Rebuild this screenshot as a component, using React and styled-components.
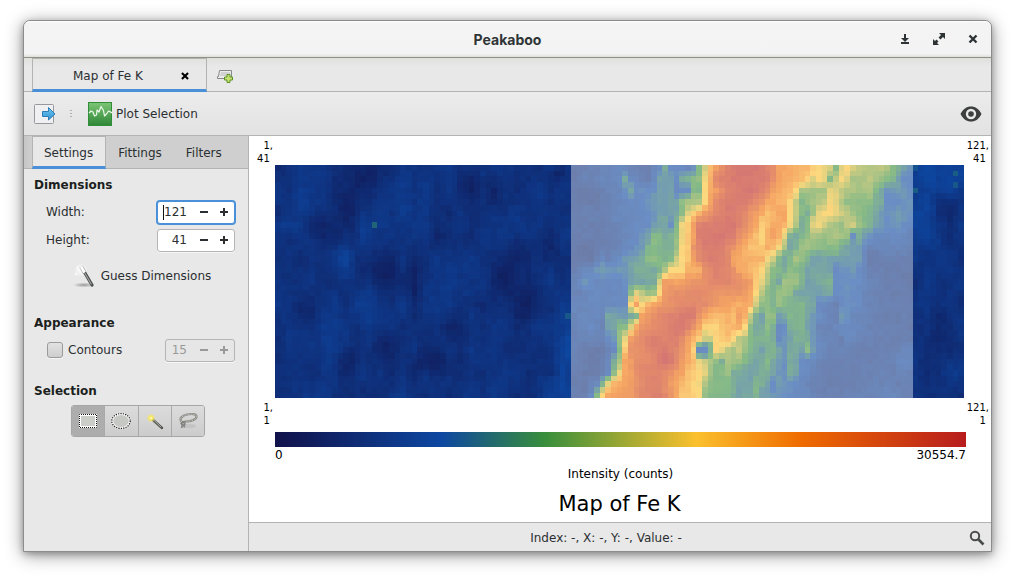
import React from "react";
import styled, { createGlobalStyle, css } from "styled-components";

const GlobalStyle = createGlobalStyle`
  * { box-sizing: border-box; }
  body {
    margin: 0;
    background: #fff;
    color: #2b2f31;
    font: 12px/16px "DejaVu Sans", sans-serif;
  }
  button, input { font: inherit; color: inherit; }
  button { padding: 0; border: 0; background: none; }
  svg { display: block; }
`;

/* ---------- intensity map data ---------- */

const COLS = 121;
const ROWS = 41;
const SELECTION = { from: 52, to: 112 };

const SPECTRUM = [
  [0, [17, 18, 74]],
  [0.235, [13, 71, 161]],
  [0.39, [56, 142, 60]],
  [0.61, [251, 192, 45]],
  [0.76, [239, 108, 0]],
  [1, [183, 28, 28]],
];

/* Every second row: column, intensity in percent, column, intensity ... */
const KEY_ROWS = [
  "52 14 56 17 60 20 65 13 67 22 68 34 69 24 72 20 73 25 74 38 75 52 76 70 77 78 79 90 81 96 85 95 87 84 88 77 93 70 95 61 97 55 98 40 99 55 100 61 102 50 104 47 106 50 107 46 108 40 110 30 111 27",
  "52 14 55 17 60 21 61 33 62 22 65 14 67 30 69 30 70 24 71 33 73 40 74 42 75 60 76 74 77 88 80 94 85 95 86 92 88 76 92 70 94 56 95 60 96 58 97 40 99 61 101 46 104 48 106 42 108 38 109 30 110 24 111 24",
  "52 13 56 13 60 20 61 24 62 33 63 23 66 25 67 30 69 30 70 22 72 22 73 40 74 38 75 60 76 74 78 85 80 92 83 96 84 94 86 85 87 77 90 70 91 62 92 46 96 45 97 58 98 56 100 46 104 46 105 38 106 32 107 25 109 30 111 25",
  "52 13 56 13 60 19 64 22 66 29 70 30 71 40 72 47 74 47 75 60 76 75 77 87 79 94 82 93 85 82 86 76 89 70 90 62 91 50 92 38 94 44 96 50 97 61 98 55 100 42 102 40 104 40 106 33 107 24 109 23 111 27",
  "52 14 56 16 60 20 65 22 67 30 70 31 71 40 72 55 73 63 74 72 75 80 77 88 79 94 81 92 83 82 85 74 86 66 88 75 89 78 90 60 91 50 92 40 93 35 94 45 95 58 97 62 98 57 100 50 101 44 103 40 104 37 106 28 107 24 109 29 111 25",
  "52 14 57 14 61 20 65 23 66 28 68 33 69 25 70 38 71 58 72 66 73 80 74 91 77 93 80 95 82 85 84 75 85 63 87 75 89 71 90 60 91 48 92 33 93 40 94 57 95 59 97 47 99 43 101 54 102 42 104 36 105 30 107 25 109 27 111 21",
  "52 14 58 14 63 22 65 30 66 40 67 38 68 33 70 41 71 57 72 65 73 75 74 92 78 96 80 93 81 85 83 75 85 63 86 72 87 78 88 72 89 56 90 36 91 33 92 38 94 46 96 43 98 46 100 42 101 24 102 34 103 28 105 22 111 20",
  "52 14 54 11 60 17 64 27 65 36 66 40 67 37 69 34 70 44 71 61 72 66 73 83 75 94 78 92 79 88 81 77 83 68 85 66 86 73 87 69 88 60 89 45 90 32 91 36 92 45 94 43 95 40 98 40 100 31 102 29 103 22 104 16 106 19 111 18",
  "52 13 55 12 57 22 58 17 62 30 64 32 65 40 67 40 68 35 69 40 70 52 71 60 72 66 73 77 74 86 76 93 78 90 79 86 80 76 83 72 85 72 86 60 87 52 88 38 89 32 91 45 92 42 93 37 94 30 98 31 102 29 103 20 104 13 107 15 111 15",
  "52 15 55 21 57 30 58 26 61 28 63 34 66 34 67 38 68 46 69 60 71 60 72 73 74 73 75 84 77 92 79 88 80 83 81 76 84 66 85 61 86 50 87 39 89 36 90 41 92 37 93 30 95 32 97 31 98 22 101 27 102 22 104 15 108 14 111 13",
  "52 17 54 27 56 20 60 21 62 30 66 33 67 55 68 80 70 77 72 80 75 85 78 90 81 85 83 80 84 66 85 58 86 46 87 38 88 33 89 45 91 43 92 36 93 30 95 33 97 37 98 22 101 25 104 18 106 15 111 14",
  "52 16 55 20 60 21 61 24 62 40 63 56 64 50 65 42 66 45 67 62 68 80 70 84 74 86 77 81 80 82 82 80 83 75 84 60 85 48 86 40 87 38 88 44 90 40 91 32 95 30 97 33 98 22 100 25 103 19 106 15 111 14",
  "52 20 56 21 61 22 62 61 63 79 64 61 65 72 67 80 70 86 73 89 76 84 78 78 81 73 83 74 84 54 85 42 87 37 88 42 90 36 92 37 94 31 95 22 98 16 99 22 101 24 103 19 105 16 111 14",
  "52 18 55 21 57 19 58 31 61 29 62 34 63 39 64 77 66 85 70 92 73 94 74 82 75 75 77 68 79 73 80 68 81 79 82 74 83 51 84 36 85 31 86 41 87 41 88 30 90 37 92 36 94 28 96 20 98 16 99 29 101 20 104 17 108 14 111 15",
  "52 17 55 22 57 17 58 30 59 31 60 39 61 40 62 55 63 75 64 82 68 89 71 95 73 84 74 76 75 62 77 63 79 70 81 74 82 62 83 42 84 34 85 33 86 41 87 35 88 22 89 24 90 36 92 36 94 26 95 18 97 15 99 22 101 22 103 17 111 14",
  "52 17 57 18 59 28 60 43 61 57 62 80 64 86 66 93 68 90 70 92 72 79 73 72 74 65 75 53 76 53 77 62 79 68 80 60 81 50 82 47 83 38 86 36 87 33 88 22 89 27 91 35 93 35 94 26 95 20 99 16 100 20 103 16 111 14",
  "52 17 55 12 57 13 59 22 60 40 61 66 62 82 66 90 68 94 70 88 71 82 72 75 73 64 76 54 77 62 79 50 80 44 81 51 82 43 83 38 85 31 87 37 89 27 90 33 92 31 93 40 94 29 95 21 97 17 104 15 109 16 110 20 111 21",
  "52 16 56 12 58 18 59 34 60 46 61 75 63 84 66 88 68 97 69 95 70 86 71 80 73 68 74 58 75 52 76 47 77 41 78 36 79 46 81 42 82 38 84 30 86 38 88 27 89 25 90 34 91 31 92 23 94 20 96 15 108 16 109 22 111 20",
  "52 14 56 12 58 21 59 40 60 58 61 75 64 88 67 90 70 80 71 76 72 68 74 62 75 56 76 45 77 38 79 42 80 34 83 31 86 35 88 27 89 24 90 34 91 30 92 22 95 17 97 14 105 16 111 17",
  "52 14 54 14 56 21 57 38 58 58 59 72 62 79 65 91 67 90 69 79 71 71 73 62 74 59 75 48 76 39 79 38 81 32 83 30 84 37 86 31 87 23 88 29 90 25 92 21 94 15 99 14 105 17 111 15",
  "52 14 54 14 55 22 56 41 57 61 58 75 62 80 64 87 67 92 69 82 70 76 71 67 74 60 75 41 77 37 79 37 81 31 83 34 84 37 85 29 88 27 90 22 92 21 96 15 104 17 107 20 111 16",
].map((line) => {
  const n = line.split(" ").map(Number);
  const points = [];
  for (let i = 0; i < n.length; i += 2) points.push([n[i], n[i + 1] / 100]);
  return points;
});

/* Local highs and lows outside the bright band: column, row, rx, ry, change */
const SPOTS = [
  [15, 3, 4, 4, -0.08], [12, 8, 2, 4, -0.07], [18, 18, 3, 3, -0.09], [24, 22, 1, 4, -0.06],
  [24, 16, 1, 3, -0.05], [27, 34, 3, 2, -0.08], [13, 34, 3, 2, -0.06], [40, 19, 2, 3, -0.07],
  [43, 24, 2, 3, -0.07], [38, 5, 2, 3, -0.05], [34, 3, 2, 2, -0.06], [49, 1, 1, 1, -0.08],
  [42, 14, 2, 2, -0.05], [47, 13, 2, 2, -0.05], [4, 25, 2, 2, -0.05], [19, 31, 2, 2, -0.06],
  [7, 10, 2, 2, -0.05], [31, 28, 2, 2, -0.05], [35, 24, 2, 1, -0.05], [30, 13, 3, 2, -0.04],
  [15, 11, 1, 3, 0.07], [12, 17, 2, 3, 0.06], [1, 10, 2, 1, 0.06], [51, 31, 2, 6, 0.08],
  [33, 20, 3, 2, 0.03], [4, 5, 2, 2, 0.04], [9, 33, 1, 3, 0.05], [15, 35, 1, 2, 0.06],
  [22, 4, 3, 4, 0.03], [50, 39, 3, 2, 0.05], [17, 24, 3, 3, 0.03], [19, 8, 3, 3, 0.03],
  [115, 1, 8, 4, 0.08], [113, 9, 3, 4, 0.06], [118, 7, 2, 2, -0.06], [116, 27, 2, 3, -0.03],
];

const SINGLE_CELLS = {
  "17,10": 0.3, "51,26": 0.27, "112,0": 0.26, "112,4": 0.28, "119,1": 0.28, "119,3": 0.27,
  "74,31": 0.38, "75,31": 0.31, "76,31": 0.38, "74,32": 0.22, "75,32": 0.23, "76,32": 0.37,
  "74,33": 0.36, "75,33": 0.32, "76,33": 0.4,
};

const random = (x, y) => {
  const s = Math.sin(x * 127.1 + y * 311.7) * 43758.5453;
  return s - Math.floor(s);
};

const smoothNoise = (x, y) => {
  const x0 = Math.floor(x);
  const y0 = Math.floor(y);
  const fx = x - x0;
  const fy = y - y0;
  const top = random(x0, y0) * (1 - fx) + random(x0 + 1, y0) * fx;
  const bottom = random(x0, y0 + 1) * (1 - fx) + random(x0 + 1, y0 + 1) * fx;
  return top * (1 - fy) + bottom * fy - 0.5;
};

const sample = (points, col) => {
  for (let i = 1; i < points.length; i++) {
    const [x1, v1] = points[i];
    if (col <= x1) {
      const [x0, v0] = points[i - 1];
      return v0 + ((v1 - v0) * (col - x0)) / (x1 - x0);
    }
  }
  return points[points.length - 1][1];
};

const intensity = (col, row) => {
  const single = SINGLE_CELLS[`${col},${row}`];
  if (single) return single;
  if (col >= SELECTION.from && col < SELECTION.to) {
    const k = row >> 1;
    const base =
      row % 2 === 0
        ? sample(KEY_ROWS[k], col)
        : (sample(KEY_ROWS[k], col) + sample(KEY_ROWS[k + 1], col)) / 2;
    const lift = base > 0.8 ? 0.02 : 0;
    return base + lift + (random(col, row) - 0.5) * 0.03;
  }
  let v = 0.142 + smoothNoise(col / 2, row / 4) * 0.06 + (random(col, row) - 0.5) * 0.025;
  SPOTS.forEach(([x, y, rx, ry, change]) => {
    const d = ((col - x) / rx) ** 2 + ((row - y) / ry) ** 2;
    v += change * 0.85 * Math.exp(-d * 0.7);
  });
  return Math.max(0.06, Math.min(0.23, v));
};

const colorOf = (v) => {
  const value = Math.max(0, Math.min(1, v));
  const i = Math.max(1, SPECTRUM.findIndex(([stop]) => value <= stop));
  const [s0, c0] = SPECTRUM[i - 1];
  const [s1, c1] = SPECTRUM[i];
  const t = (value - s0) / (s1 - s0);
  return `rgb(${c0.map((c, n) => Math.round(c + (c1[n] - c) * t)).join(",")})`;
};

const CELLS = Array.from({ length: COLS * ROWS }, (_, i) => {
  const x = i % COLS;
  const y = Math.floor(i / COLS);
  return { x, y, fill: colorOf(intensity(x, y)) };
});

const SPECTRUM_CSS = SPECTRUM.map(([stop, c]) => `rgb(${c.join(",")}) ${Math.round(stop * 100)}%`).join(", ");

/* ---------- layout ---------- */

const Desktop = styled.div`
  display: flex;
  min-height: 100vh;
  padding: 20px 23px 26px;
`;

const Window = styled.div`
  flex: 1;
  min-width: 0;
  display: flex;
  flex-direction: column;
  border: 1px solid #8c8c8c;
  border-radius: 7px 7px 0 0;
  background: #e8e8e8;
  box-shadow: 0 3px 18px rgba(0, 0, 0, 0.42), 0 2px 6px rgba(0, 0, 0, 0.25);
`;

const TitleBar = styled.header`
  display: grid;
  grid-template-columns: 1fr auto 1fr;
  align-items: center;
  height: 37px;
  border-bottom: 1px solid #8f9184;
  border-radius: 6px 6px 0 0;
  background: linear-gradient(#fff 0, #f4f4f4 2px, #f3f3f3 33px, #dededa 36px);
`;

const Title = styled.h1`
  grid-column: 2;
  margin: 0;
  padding-top: 2px;
  color: #2f3536;
  font: bold 14px/20px "Inter", sans-serif;
`;

const WindowButtons = styled.div`
  display: flex;
  justify-content: flex-end;
  gap: 18px;
  padding-right: 10px;
  color: #2e3436;
`;

const TabStrip = styled.div`
  display: flex;
  align-items: stretch;
  height: 34px;
  padding-left: 8px;
  border-bottom: 1px solid #b3b3b1;
  background: linear-gradient(#dfdfdd 0, #e8e8e8 8px);
`;

const DocumentTab = styled.div`
  display: flex;
  align-items: center;
  justify-content: space-between;
  width: 175px;
  margin-bottom: -1px;
  padding: 3px 14px 0 40px;
  border: 1px solid #b3b3b1;
  border-bottom: 3px solid #4a90d9;
  white-space: nowrap;
`;

const PlainButton = styled.button`
  display: inline-flex;
  align-items: center;
  gap: ${(p) => p.$gap || 0}px;
`;

const NewTabButton = styled(PlainButton)`
  padding: 2px 9px 0;
`;

const ToolBar = styled.div`
  display: flex;
  align-items: center;
  height: 44px;
  padding: 1px 9px 0 10px;
  border-bottom: 1px solid #b3b3b1;
  background: linear-gradient(#ececec, #e2e2e2);
`;

const Handle = styled.span`
  width: 2px;
  height: 8px;
  margin: 0 16px 0 14px;
  background: repeating-linear-gradient(#b0b0b0 0 1px, transparent 1px 3px);
`;

const Spacer = styled.span`
  flex: 1;
`;

const Body = styled.div`
  flex: 1;
  display: flex;
`;

const Sidebar = styled.aside`
  flex: 0 0 225px;
  border-right: 1px solid #b3b3b1;
`;

const SideTabs = styled.div`
  display: flex;
  height: 33px;
  padding-left: 8px;
  border-bottom: 1px solid #b3b3b1;
  background: linear-gradient(90deg, #c6c6c6, #cfcfcf 8px);
`;

const SideTab = styled.button`
  padding: 2px 11px 0;
  margin-bottom: -1px;
  border: 1px solid transparent;
  border-bottom-width: 3px;
  ${(p) =>
    p.$active &&
    css`
      padding: 2px 12px 0 11px;
      border-color: #b3b3b1;
      border-bottom-color: #4a90d9;
      background: #e8e8e8;
    `}
`;

const Panel = styled.div`
  padding: 8px 13px 0 10px;
`;

const Heading = styled.h2`
  margin: 0;
  color: #1c1f20;
  font: bold 12px/16px "DejaVu Sans", sans-serif;
`;

const Group = styled.section`
  margin-bottom: ${(p) => p.$after || 0}px;
`;

const Field = styled.div`
  display: flex;
  align-items: center;
  justify-content: space-between;
  height: 28px;
  padding-left: 12px;
  &:first-of-type { margin-top: 5px; }
`;

const CheckLabel = styled.label`
  display: flex;
  align-items: center;
  gap: 5px;
`;

const CheckBox = styled.input`
  appearance: none;
  width: 16px;
  height: 16px;
  margin: 0 0 0 1px;
  border: 1px solid #9b9b9b;
  border-radius: 3px;
  background: linear-gradient(#e2e2e2, #cecece);
  box-shadow: 0 1px #f6f6f6;
`;

const SpinBox = styled.div`
  display: flex;
  align-items: center;
  width: ${(p) => (p.$narrow ? 70 : 78)}px;
  height: 23px;
  border: 1px solid ${(p) => (p.$focused ? "#4a90d9" : "#b5b5b5")};
  border-radius: 3px;
  color: ${(p) => (p.$disabled ? "#999" : "#2b2f31")};
  background: ${(p) => (p.$disabled ? "#e6e6e6" : "#fff")};
  box-shadow: ${(p) => (p.$focused ? "0 0 0 1px #4a90d9" : "0 1px #f6f6f6")};
`;

const Caret = styled.span`
  width: 1px;
  height: 15px;
  margin-left: 5px;
  background: #111;
`;

const SpinInput = styled.input`
  flex: 1;
  width: 0;
  min-width: 0;
  padding: 0 7px 0 0;
  border: 0;
  outline: 0;
  background: none;
  text-align: right;
`;

const StepButton = styled.button`
  display: flex;
  justify-content: center;
  width: 20px;
`;

const GuessRow = styled.div`
  display: flex;
  justify-content: center;
  margin-top: 10px;
  padding-left: 15px;
`;

const ToolGroup = styled.div`
  display: flex;
  width: 134px;
  margin: 6px auto 0 37px;
  border: 1px solid #a6a6a6;
  border-radius: 3px;
  overflow: hidden;
`;

const ToolButton = styled.button`
  display: flex;
  flex: 1;
  align-items: center;
  justify-content: center;
  height: 30px;
  background: ${(p) => (p.$pressed ? "#adadad" : "linear-gradient(#dcdcdc, #cccccc)")};
  & + & { border-left: 1px solid #a9a9a9; }
`;

const Main = styled.main`
  flex: 1;
  min-width: 0;
  display: flex;
  flex-direction: column;
  color: #000;
  background: #fff;
`;

const Chart = styled.figure`
  flex: 1;
  margin: 0;
`;

const CornerRow = styled.div`
  display: flex;
  justify-content: space-between;
  padding: 3px 2px 0 8px;
  font-size: 10px;
  line-height: 13px;
  text-align: right;
  white-space: pre;
`;

const CornerLabel = styled.span`
  min-width: 16px;
`;

const HeatMap = styled.svg`
  width: calc(100% - 53px);
  margin-left: 26px;
  aspect-ratio: 121 / 41;
`;

const Scale = styled.div`
  margin: 5px 25px 0 26px;
`;

const ScaleBar = styled.div`
  height: 15px;
  background: linear-gradient(90deg, ${SPECTRUM_CSS});
`;

const ScaleLabels = styled.div`
  display: flex;
  justify-content: space-between;
  padding-top: 1px;
  line-height: 15px;
`;

const AxisTitle = styled.div`
  margin-top: 4px;
  line-height: 15px;
  text-align: center;
`;

const ChartTitle = styled.figcaption`
  margin-top: 9px;
  padding-right: 2px;
  font-size: 21px;
  line-height: 26px;
  text-align: center;
`;

const StatusBar = styled.footer`
  display: grid;
  grid-template-columns: 1fr 28px;
  align-items: center;
  height: 29px;
  padding-top: 1px;
  border-top: 1px solid #b3b3b1;
  color: #2b2f31;
  background: #e8e8e8;
`;

const StatusText = styled.span`
  text-align: center;
`;

const ZoomButton = styled(PlainButton)`
  padding-left: 6px;
`;

/* ---------- icons ---------- */

const MinimizeIcon = () => (
  <svg width="16" height="16" viewBox="0 0 16 16" fill="currentColor">
    <path d="M7 3h2v4h3L8 11 4 7h3zM4 11h8v2H4z" />
  </svg>
);

const MaximizeIcon = () => (
  <svg width="16" height="16" viewBox="0 0 16 16" fill="currentColor">
    <path d="M8 2h6v6l-2-2-2.500 2.500-2-2L10 4zM2 8l2 2 1.500-1.500 2 2L6 12l2 2H2z" />
  </svg>
);

const CloseIcon = ({ color = "currentColor", size = 16 }) => (
  <svg width={size} height={size} viewBox="0 0 16 16" fill="none" stroke={color} strokeWidth="2.400">
    <path d="M4.500 4.500l7 7M11.500 4.500l-7 7" />
  </svg>
);

const NewTabIcon = () => (
  <svg width="18" height="16" viewBox="0 0 18 16">
    <path d="M3.500 2.500h12v8h-14v-2h1z" fill="#ececec" stroke="#888" />
    <path d="M5 4h9v4H4z" fill="#d2d2d2" />
    <path d="M11 6.500h3v2.500h2.500v3H14v2.500h-3V12H8.500v-3H11z" fill="#c5e070" stroke="#5d9427" />
  </svg>
);

const ExportIcon = () => (
  <svg width="22" height="22" viewBox="0 0 22 22">
    <defs>
      <linearGradient id="arrow" x2="0" y2="1">
        <stop offset="0" stopColor="#6fc7f0" />
        <stop offset="1" stopColor="#2f93d3" />
      </linearGradient>
    </defs>
    <rect x="0.500" y="1.500" width="19" height="19" rx="1" fill="#f0f0f2" stroke="#96989c" />
    <path d="M8.500 8.500h6v-4l6.500 6.500-6.500 6v-3.500h-6z" fill="url(#arrow)" stroke="#2e7cb4" />
  </svg>
);

const PlotIcon = () => (
  <svg width="24" height="24" viewBox="0 0 24 24">
    <defs>
      <linearGradient id="plot" x2="0" y2="1">
        <stop offset="0" stopColor="#7cc576" />
        <stop offset="1" stopColor="#2f8637" />
      </linearGradient>
    </defs>
    <rect x="0.500" y="0.500" width="23" height="23" fill="url(#plot)" stroke="#2f8f38" />
    <path d="M1 11l2-2 2 1 1.500 4 2-1 .5-5 2 2 2-5.500 2.500 4 1 5.500 2-2 2-3 4 2" fill="none" stroke="#eef9ec" strokeWidth="1.200" strokeLinejoin="round" />
  </svg>
);

const EyeIcon = () => (
  <svg width="22" height="16" viewBox="0 0 22 16">
    <path d="M0.500 8C3 3 6.500 0.500 11 0.500S19 3 21.500 8C19 13 15.500 15.500 11 15.500S3 13 0.500 8z" fill="#3d3f3f" />
    <circle cx="11" cy="8" r="5.200" fill="#e8e8e8" />
    <circle cx="11" cy="8" r="2.800" fill="#3d3f3f" />
  </svg>
);

const SearchIcon = () => (
  <svg width="16" height="16" viewBox="0 0 16 16" fill="none" stroke="#4a4c4c">
    <circle cx="6" cy="6" r="4.200" strokeWidth="2" />
    <path d="M9 9l5.500 5.500" strokeWidth="2.600" />
  </svg>
);

const WandIcon = () => (
  <svg width="24" height="24" viewBox="0 0 24 24">
    <defs>
      <radialGradient id="shade">
        <stop offset="0" stopColor="#999" />
        <stop offset="1" stopColor="#999" stopOpacity="0" />
      </radialGradient>
      <radialGradient id="glow">
        <stop offset="0" stopColor="#fff" />
        <stop offset="1" stopColor="#fff" stopOpacity="0" />
      </radialGradient>
    </defs>
    <ellipse cx="11" cy="21" rx="11" ry="2.500" fill="url(#shade)" />
    <circle cx="8" cy="6" r="7" fill="url(#glow)" />
    <path d="M9 4l10 17" stroke="#4b4d4d" strokeWidth="3.200" strokeLinecap="round" />
    <path d="M8.500 3.500l10 17" stroke="#a0a2a2" strokeWidth="1.200" />
    <path d="M8 2.500l3.500 6" stroke="#b5b5b5" strokeWidth="4" />
    <path d="M8 2.500l3.500 6" stroke="#fff" strokeWidth="2.500" />
    <path d="M3 8l.6 1.400L5 10l-1.400.6L3 12l-.6-1.400L1 10l1.400-.6zM5 2l.5 1 1 .5-1 .5L5 5l-.5-1-1-.5 1-.5z" fill="#fff" />
  </svg>
);

const RectSelectIcon = () => (
  <svg width="20" height="20" viewBox="0 0 20 20">
    <rect x="2" y="4" width="16" height="12" fill="#cbcdc9" stroke="#fff" strokeWidth="2" />
    <rect x="1.500" y="3.500" width="17" height="13" fill="none" stroke="#111" strokeDasharray="1 1" strokeDashoffset="0.500" />
  </svg>
);

const EllipseSelectIcon = () => (
  <svg width="20" height="20" viewBox="0 0 20 20">
    <ellipse cx="10" cy="10" rx="8.800" ry="7" fill="#c6c8c4" stroke="#fff" strokeWidth="2" />
    <ellipse cx="10" cy="10" rx="9.200" ry="7.400" fill="none" stroke="#111" strokeWidth="1.200" strokeDasharray="1.200 1.200" />
  </svg>
);

const WandSelectIcon = () => (
  <svg width="20" height="20" viewBox="0 0 20 20">
    <defs>
      <radialGradient id="spark">
        <stop offset="0" stopColor="#fffbe0" />
        <stop offset="0.400" stopColor="#f7e65c" />
        <stop offset="1" stopColor="#f7e65c" stopOpacity="0" />
      </radialGradient>
    </defs>
    <path d="M7 8l10 9" stroke="#555850" strokeWidth="2.400" strokeLinecap="round" />
    <path d="M7 7.500l9 8.500" stroke="#a9ac9f" />
    <circle cx="6" cy="7" r="4.500" fill="url(#spark)" />
  </svg>
);

const LassoIcon = () => (
  <svg width="20" height="20" viewBox="0 0 20 20" fill="none">
    <ellipse cx="11" cy="15" rx="7" ry="2" fill="#b9b9b9" opacity="0.600" />
    <path d="M4 11C0.500 8 4 4.500 9 3.500s9.500-.5 9.500 2-5 5-10 5c-2.500 0-4 .5-4.500 1.500" stroke="#85877f" strokeWidth="2.200" />
    <path d="M4 11C0.500 8 4 4.500 9 3.500s9.500-.5 9.500 2-5 5-10 5" stroke="#d2d4cf" strokeWidth="0.800" strokeDasharray="2 1" />
    <path d="M3 12.500c1-1.500 4-1 4 .5s-3 1.500-4-.5zM4.500 13.500l-1 3.500M5.500 13.500l1 3" stroke="#7c7e79" strokeWidth="1.400" />
  </svg>
);

const MinusIcon = () => (
  <svg width="10" height="10" viewBox="0 0 10 10" fill="currentColor">
    <path d="M1 4h8v2H1z" />
  </svg>
);

const PlusIcon = () => (
  <svg width="10" height="10" viewBox="0 0 10 10" fill="currentColor">
    <path d="M1 4h3V1h2v3h3v2H6v3H4V6H1z" />
  </svg>
);

/* ---------- parts ---------- */

function Spin({ id, label, value, focused, disabled, narrow }) {
  return (
    <SpinBox $focused={focused} $disabled={disabled} $narrow={narrow}>
      {focused && <Caret />}
      <SpinInput id={id} aria-label={label} defaultValue={value} disabled={disabled} />
      <StepButton aria-label="Decrease" disabled={disabled}><MinusIcon /></StepButton>
      <StepButton aria-label="Increase" disabled={disabled}><PlusIcon /></StepButton>
    </SpinBox>
  );
}

const SELECT_TOOLS = [
  ["Rectangle", RectSelectIcon],
  ["Ellipse", EllipseSelectIcon],
  ["Similar area", WandSelectIcon],
  ["Lasso", LassoIcon],
];

export default function App() {
  return (
    <Desktop>
      <GlobalStyle />
      <Window>
        <TitleBar>
          <Title>Peakaboo</Title>
          <WindowButtons>
            <PlainButton aria-label="Minimize"><MinimizeIcon /></PlainButton>
            <PlainButton aria-label="Maximize"><MaximizeIcon /></PlainButton>
            <PlainButton aria-label="Close"><CloseIcon /></PlainButton>
          </WindowButtons>
        </TitleBar>

        <TabStrip>
          <DocumentTab>
            <span>Map of Fe K</span>
            <PlainButton aria-label="Close tab"><CloseIcon color="#000" size={14} /></PlainButton>
          </DocumentTab>
          <NewTabButton aria-label="New tab"><NewTabIcon /></NewTabButton>
        </TabStrip>

        <ToolBar>
          <PlainButton aria-label="Export"><ExportIcon /></PlainButton>
          <Handle />
          <PlainButton $gap={4}><PlotIcon />Plot Selection</PlainButton>
          <Spacer />
          <PlainButton aria-label="View options"><EyeIcon /></PlainButton>
        </ToolBar>

        <Body>
          <Sidebar>
            <SideTabs>
              <SideTab $active>Settings</SideTab>
              <SideTab>Fittings</SideTab>
              <SideTab>Filters</SideTab>
            </SideTabs>
            <Panel>
              <Group $after={27}>
                <Heading>Dimensions</Heading>
                <Field>
                  <label htmlFor="width">Width:</label>
                  <Spin id="width" value="121" focused />
                </Field>
                <Field>
                  <label htmlFor="height">Height:</label>
                  <Spin id="height" value="41" />
                </Field>
                <GuessRow>
                  <PlainButton $gap={4}><WandIcon />Guess Dimensions</PlainButton>
                </GuessRow>
              </Group>
              <Group $after={19}>
                <Heading>Appearance</Heading>
                <Field>
                  <CheckLabel><CheckBox type="checkbox" />Contours</CheckLabel>
                  <Spin id="contours" label="Contour steps" value="15" disabled narrow />
                </Field>
              </Group>
              <Group>
                <Heading>Selection</Heading>
                <ToolGroup>
                  {SELECT_TOOLS.map(([name, Icon], i) => (
                    <ToolButton key={name} aria-label={name} $pressed={i === 0}><Icon /></ToolButton>
                  ))}
                </ToolGroup>
              </Group>
            </Panel>
          </Sidebar>

          <Main>
            <Chart>
              <CornerRow>
                <CornerLabel>{"1,\n41 "}</CornerLabel>
                <CornerLabel>{"121,\n41 "}</CornerLabel>
              </CornerRow>
              <HeatMap viewBox="0 0 121 41" preserveAspectRatio="none" shapeRendering="crispEdges">
                {CELLS.map((c) => (
                  <rect key={`${c.x},${c.y}`} x={c.x} y={c.y} width="1" height="1" fill={c.fill} />
                ))}
                <rect x={SELECTION.from} width={SELECTION.to - SELECTION.from} height={ROWS} fill="#fff" opacity="0.390" />
              </HeatMap>
              <CornerRow>
                <CornerLabel>{"1,\n1 "}</CornerLabel>
                <CornerLabel>{"121,\n1 "}</CornerLabel>
              </CornerRow>
              <Scale>
                <ScaleBar />
                <ScaleLabels>
                  <span>0</span>
                  <span>30554.7</span>
                </ScaleLabels>
                <AxisTitle>Intensity (counts)</AxisTitle>
                <ChartTitle as="div">Map of Fe K</ChartTitle>
              </Scale>
            </Chart>
            <StatusBar>
              <StatusText>Index: -, X: -, Y: -, Value: -</StatusText>
              <ZoomButton aria-label="Zoom"><SearchIcon /></ZoomButton>
            </StatusBar>
          </Main>
        </Body>
      </Window>
    </Desktop>
  );
}
